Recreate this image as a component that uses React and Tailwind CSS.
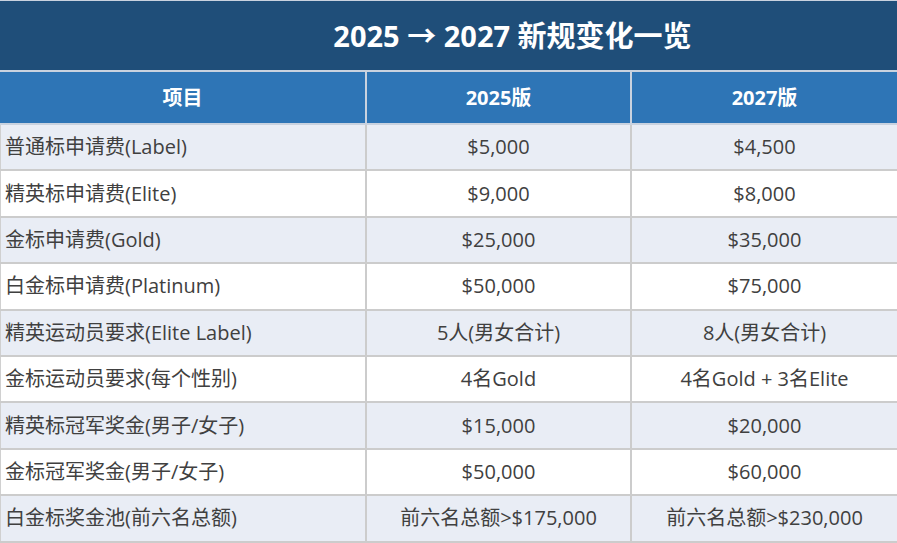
import React from "react";

const rows = [
  ["普通标申请费(Label)", "$5,000", "$4,500"],
  ["精英标申请费(Elite)", "$9,000", "$8,000"],
  ["金标申请费(Gold)", "$25,000", "$35,000"],
  ["白金标申请费(Platinum)", "$50,000", "$75,000"],
  ["精英运动员要求(Elite Label)", "5人(男女合计)", "8人(男女合计)"],
  ["金标运动员要求(每个性别)", "4名Gold", "4名Gold + 3名Elite"],
  ["精英标冠军奖金(男子/女子)", "$15,000", "$20,000"],
  ["金标冠军奖金(男子/女子)", "$50,000", "$60,000"],
  ["白金标奖金池(前六名总额)", "前六名总额>$175,000", "前六名总额>$230,000"],
];

const App = () => {
  return (
    <div
      className="w-[897px] h-[543px] bg-white overflow-hidden"
      style={{ fontFamily: '"Open Sans", "Noto Sans CJK SC", sans-serif' }}
    >
      {/* title */}
      <div className="h-[72px] bg-[#1f4e79] border-t border-[#c9d2df] border-b-2 border-b-[#c9d2df] flex items-center justify-center pl-[128px]">
        <h1 className="text-white text-[29px] font-bold">
          2025 → 2027 新规变化一览
        </h1>
      </div>

      {/* header */}
      <div className="grid grid-cols-[367px_265px_265px] h-[53px] bg-[#2e75b6] border-b-2 border-[#c9d2df] text-white text-[20px] font-bold">
        <div className="flex items-center justify-center border-r-2 border-[#c9d2df]">项目</div>
        <div className="flex items-center justify-center border-r-2 border-[#c9d2df]">2025版</div>
        <div className="flex items-center justify-center">2027版</div>
      </div>

      {/* body */}
      {rows.map((row, i) => (
        <div
          key={i}
          className={
            "grid grid-cols-[367px_265px_265px] h-[46.4px] border-b-2 border-[#cccccc] text-[20px] text-[#404040] " +
            (i % 2 === 0 ? "bg-[#e9edf5]" : "bg-white")
          }
        >
          <div className="flex items-center pl-[4px] border-l border-[#d0d0d0] border-r-2 border-r-[#cccccc]">
            {row[0]}
          </div>
          <div className="flex items-center justify-center border-r-2 border-[#cccccc]">{row[1]}</div>
          <div className="flex items-center justify-center whitespace-pre">{row[2]}</div>
        </div>
      ))}
    </div>
  );
};

export default App;
